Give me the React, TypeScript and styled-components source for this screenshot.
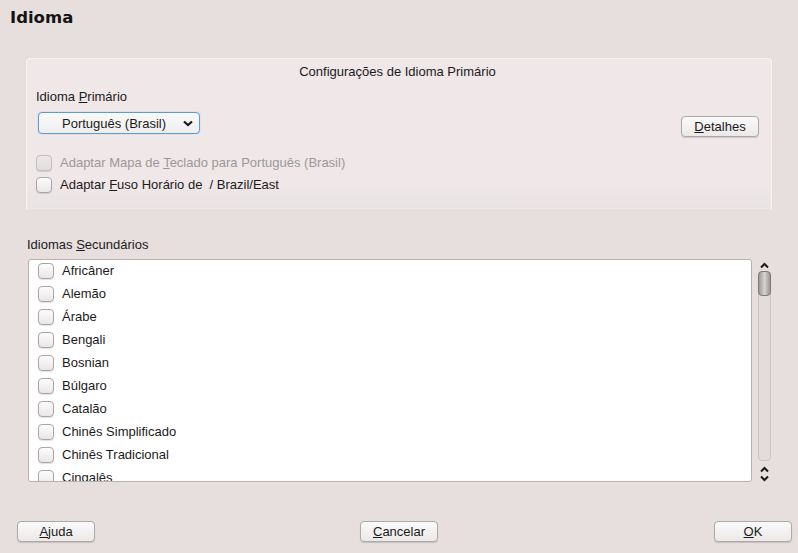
import { FunctionComponent, ReactNode } from "react";
import styled, { createGlobalStyle } from "styled-components";

const GlobalStyle = createGlobalStyle`
  html, body {
    margin: 0;
    padding: 0;
    background: #e7dfde;
  }
  body {
    font-family: "Liberation Sans", Arial, sans-serif;
    font-size: 13px;
    color: #1b1b1b;
  }
`;

const Window = styled.div`
  width: 798px;
  height: 553px;
  box-sizing: border-box;
  background: #e7dfde;
  display: flex;
  flex-direction: column;
  padding: 6px 0 0 0;
  overflow: hidden;
`;

const Title = styled.h1`
  margin: 0 0 0 10px;
  font-family: "DejaVu Sans", sans-serif;
  font-size: 16.5px;
  font-weight: bold;
  line-height: 24px;
  color: #141414;
`;

const GroupBox = styled.section`
  margin: 28px 26px 0 26px;
  height: 152px;
  box-sizing: border-box;
  border-radius: 4px 4px 0 0;
  border: 1px solid #f9f5f5;
  border-bottom: none;
  background: linear-gradient(to bottom, #efe7e8 0%, #efe7e8 82%, #e9e3e2 100%);
  box-shadow: 0 0 1px rgba(0, 0, 0, 0.18);
  display: flex;
  flex-direction: column;
  padding: 5px 12px 0 9px;
`;

const GroupTitle = styled.div`
  text-align: center;
  line-height: 16px;
  font-size: 13px;
`;

const PrimaryRow = styled.div`
  display: flex;
  align-items: flex-end;
  justify-content: space-between;
  margin-top: 9px;
`;

const Field = styled.div`
  display: flex;
  flex-direction: column;
  gap: 7px;
`;

const Label = styled.span`
  font-size: 13px;
  line-height: 16px;
`;

const Combo = styled.div`
  width: 162px;
  height: 22px;
  box-sizing: border-box;
  margin: 0 0 3px 2px;
  border: 1px solid #5b9bd6;
  border-radius: 4px;
  background: linear-gradient(to bottom, #fbfafa, #efeded);
  box-shadow: 0 0 1px rgba(60, 120, 190, 0.5);
  display: flex;
  align-items: center;
  justify-content: space-between;
  padding: 0 6px 0 23px;
  font-size: 13px;
`;

const Button = styled.button<{ $gapLeft?: number }>`
  width: 78px;
  height: 21px;
  box-sizing: border-box;
  margin-left: ${(p) => (p.$gapLeft !== undefined ? `${p.$gapLeft}px` : "0")};
  border: 1px solid #aea8a8;
  border-radius: 4px;
  background: linear-gradient(to bottom, #fbfafa, #ebe8e8);
  box-shadow: 0 1px 1px rgba(0, 0, 0, 0.15);
  font-family: "Liberation Sans", Arial, sans-serif;
  font-size: 13px;
  color: #1b1b1b;
  padding: 0;
  display: flex;
  align-items: center;
  justify-content: center;
`;

const CheckList = styled.div`
  display: flex;
  flex-direction: column;
  gap: 6px;
  margin-top: 18px;
`;

const CheckRow = styled.label<{ $disabled?: boolean }>`
  display: flex;
  align-items: center;
  gap: 8px;
  font-size: 13px;
  line-height: 16px;
  color: ${(p) => (p.$disabled ? "#9d9898" : "#1b1b1b")};
`;

const Box = styled.span<{ $disabled?: boolean }>`
  width: 16px;
  height: 16px;
  box-sizing: border-box;
  border-radius: 4px;
  border: 1px solid ${(p) => (p.$disabled ? "#c4bebe" : "#aba5a5")};
  background: ${(p) =>
    p.$disabled
      ? "linear-gradient(to bottom, #ece8e8, #e2dede)"
      : "linear-gradient(to bottom, #fdfcfc, #e9e6e6)"};
  box-shadow: 0 1px 1px rgba(0, 0, 0, 0.12);
  flex: none;
`;

const SecondaryLabel = styled.div`
  margin: 27px 0 0 27px;
  font-size: 13px;
  line-height: 16px;
`;

const ListArea = styled.div`
  display: flex;
  margin: 6px 0 0 28px;
  gap: 5px;
  height: 223px;
`;

const ListFrame = styled.div`
  width: 724px;
  box-sizing: border-box;
  background: #ffffff;
  border: 1px solid #b9b2b2;
  border-radius: 3px;
  overflow: hidden;
  padding: 3px 0 0 9px;
  display: flex;
  flex-direction: column;
  gap: 7px;
`;

const ListItem = styled.div`
  display: flex;
  align-items: center;
  gap: 8px;
  font-size: 13px;
  line-height: 16px;
  flex: none;
`;

const ScrollBar = styled.div`
  width: 15px;
  display: flex;
  flex-direction: column;
  align-items: center;
  padding-top: 3px;
`;

const Arrow = styled.svg<{ $gapTop?: number }>`
  display: block;
  flex: none;
  margin-top: ${(p) => p.$gapTop ?? 0}px;
`;

const Track = styled.div`
  width: 13px;
  flex: 1;
  box-sizing: border-box;
  border: 1px solid #cbc3c3;
  border-radius: 4px;
  margin: 2px 0 5px 0;
  background: #e4dcdb;
  position: relative;
`;

const Handle = styled.div`
  position: absolute;
  left: -1px;
  top: -1px;
  width: 13px;
  height: 25px;
  box-sizing: border-box;
  border: 1px solid #7d7878;
  border-radius: 4px;
  background: linear-gradient(to right, #9d9999, #d6d3d3 50%, #9a9696);
`;

const Footer = styled.div`
  display: flex;
  align-items: center;
  margin-top: auto;
  padding: 0 6px 11px 17px;

  & > :last-child {
    margin-left: auto;
  }
`;

const Mn: FunctionComponent<{ children: ReactNode }> = ({ children }) => <u>{children}</u>;

const Chevron: FunctionComponent<{ up?: boolean; gapTop?: number }> = ({ up, gapTop }) => (
  <Arrow width="9" height="7" viewBox="0 0 9 7" $gapTop={gapTop}>
    <path
      d={up ? "M1 5.5 L4.5 2 L8 5.5" : "M1 1.5 L4.5 5 L8 1.5"}
      fill="none"
      stroke="#1a1a1a"
      strokeWidth="2"
    />
  </Arrow>
);

const languages = [
  "Africâner",
  "Alemão",
  "Árabe",
  "Bengali",
  "Bosnian",
  "Búlgaro",
  "Catalão",
  "Chinês Simplificado",
  "Chinês Tradicional",
  "Cingalês",
];

export default function App() {
  return (
    <>
      <GlobalStyle />
      <Window>
        <Title>Idioma</Title>
        <GroupBox>
          <GroupTitle>Configurações de Idioma Primário</GroupTitle>
          <PrimaryRow>
            <Field>
              <Label>
                Idioma <Mn>P</Mn>rimário
              </Label>
              <Combo>
                <span>Português (Brasil)</span>
                <Arrow width="10" height="7" viewBox="0 0 10 7">
                  <path d="M1 1.5 L5 5 L9 1.5" fill="none" stroke="#1a1a1a" strokeWidth="2.2" />
                </Arrow>
              </Combo>
            </Field>
            <Button>
              <Mn>D</Mn>etalhes
            </Button>
          </PrimaryRow>
          <CheckList>
            <CheckRow $disabled>
              <Box $disabled />
              <span>
                Adaptar Mapa de <Mn>T</Mn>eclado para Português (Brasil)
              </span>
            </CheckRow>
            <CheckRow>
              <Box />
              <span>
                Adaptar <Mn>F</Mn>uso Horário de &nbsp;/ Brazil/East
              </span>
            </CheckRow>
          </CheckList>
        </GroupBox>
        <SecondaryLabel>
          Idiomas <Mn>S</Mn>ecundários
        </SecondaryLabel>
        <ListArea>
          <ListFrame>
            {languages.map((lang) => (
              <ListItem key={lang}>
                <Box />
                <span>{lang}</span>
              </ListItem>
            ))}
          </ListFrame>
          <ScrollBar>
            <Chevron up />
            <Track>
              <Handle />
            </Track>
            <Chevron up />
            <Chevron gapTop={2} />
          </ScrollBar>
        </ListArea>
        <Footer>
          <Button>
            <Mn>A</Mn>juda
          </Button>
          <Button $gapLeft={265}>
            <Mn>C</Mn>ancelar
          </Button>
          <Button>
            <Mn>O</Mn>K
          </Button>
        </Footer>
      </Window>
    </>
  );
}
